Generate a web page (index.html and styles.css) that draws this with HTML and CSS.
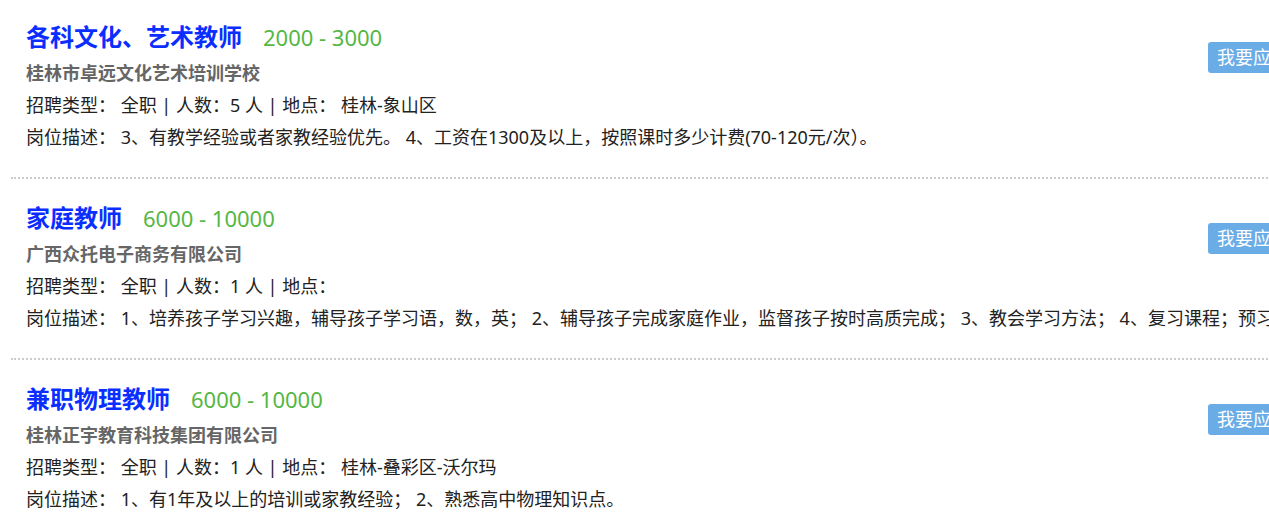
FILE: index.html
```html
<!DOCTYPE html>
<html lang="zh-CN">
<head>
    <meta charset="UTF-8">
    <meta name="viewport" content="width=device-width, initial-scale=1.0">
    <title>招聘信息</title>
    <link rel="stylesheet" href="styles.css">
</head>
<body>
    <div class="job-list">
        <div class="job-item">
            <div class="job-info">
                <h3 class="job-title"><a href="#">各科文化、艺术教师</a><span class="salary">2000 - 3000</span></h3>
                <div class="company">桂林市卓远文化艺术培训学校</div>
                <p>招聘类型：&nbsp;全职 | 人数：5 人 | 地点：&nbsp;桂林-象山区</p>
                <p>岗位描述：&nbsp;3、有教学经验或者家教经验优先。 4、工资在1300及以上，按照课时多少计费(70-120元/次）。</p>
            </div>
            <a class="apply-btn" href="#">我要应聘</a>
        </div>
        <div class="job-item">
            <div class="job-info">
                <h3 class="job-title"><a href="#">家庭教师</a><span class="salary">6000 - 10000</span></h3>
                <div class="company">广西众托电子商务有限公司</div>
                <p>招聘类型：&nbsp;全职 | 人数：1 人 | 地点：</p>
                <p>岗位描述：&nbsp;1、培养孩子学习兴趣，辅导孩子学习语，数，英； 2、辅导孩子完成家庭作业，监督孩子按时高质完成； 3、教会学习方法； 4、复习课程；预习新课程。</p>
            </div>
            <a class="apply-btn" href="#">我要应聘</a>
        </div>
        <div class="job-item">
            <div class="job-info">
                <h3 class="job-title"><a href="#">兼职物理教师</a><span class="salary">6000 - 10000</span></h3>
                <div class="company">桂林正宇教育科技集团有限公司</div>
                <p>招聘类型：&nbsp;全职 | 人数：1 人 | 地点：&nbsp;桂林-叠彩区-沃尔玛</p>
                <p>岗位描述：&nbsp;1、有1年及以上的培训或家教经验； 2、熟悉高中物理知识点。</p>
            </div>
            <a class="apply-btn" href="#">我要应聘</a>
        </div>
    </div>
</body>
</html>
```

FILE: styles.css
```css
html, body {
    overflow: hidden;
}
body {
    margin: 0;
    font-family: "Noto Sans", "Noto Sans CJK SC", sans-serif;
    font-size: 18px;
    color: #222;
    background: #fff;
}
.job-list {
    width: 1300px;
    margin-left: 11px;
}
.job-item {
    display: flex;
    align-items: flex-start;
    justify-content: space-between;
    padding: 21px 13px 24px 15px;
    border-bottom: 2px dotted #ccc;
}
.job-item:first-child {
    padding-top: 19px;
}
.job-info {
    flex: 1;
    min-width: 0;
    white-space: nowrap;
}
.job-title {
    margin: 0;
    font-size: 24px;
    line-height: 36px;
    font-weight: bold;
}
.job-title a {
    color: #0a2eff;
    text-decoration: none;
}
.salary {
    margin-left: 21px;
    font-size: 22px;
    line-height: 1;
    font-weight: normal;
    color: #55b743;
}
.company {
    margin-top: 2px;
    font-size: 18px;
    line-height: 32px;
    font-weight: bold;
    color: #666;
}
.job-info p {
    margin: 0;
    line-height: 32px;
}
.apply-btn {
    flex-shrink: 0;
    margin-top: 23px;
    padding: 0 9px;
    line-height: 31px;
    font-size: 18px;
    color: #fff;
    background: #6aace6;
    border-radius: 3px;
    text-decoration: none;
}
```
